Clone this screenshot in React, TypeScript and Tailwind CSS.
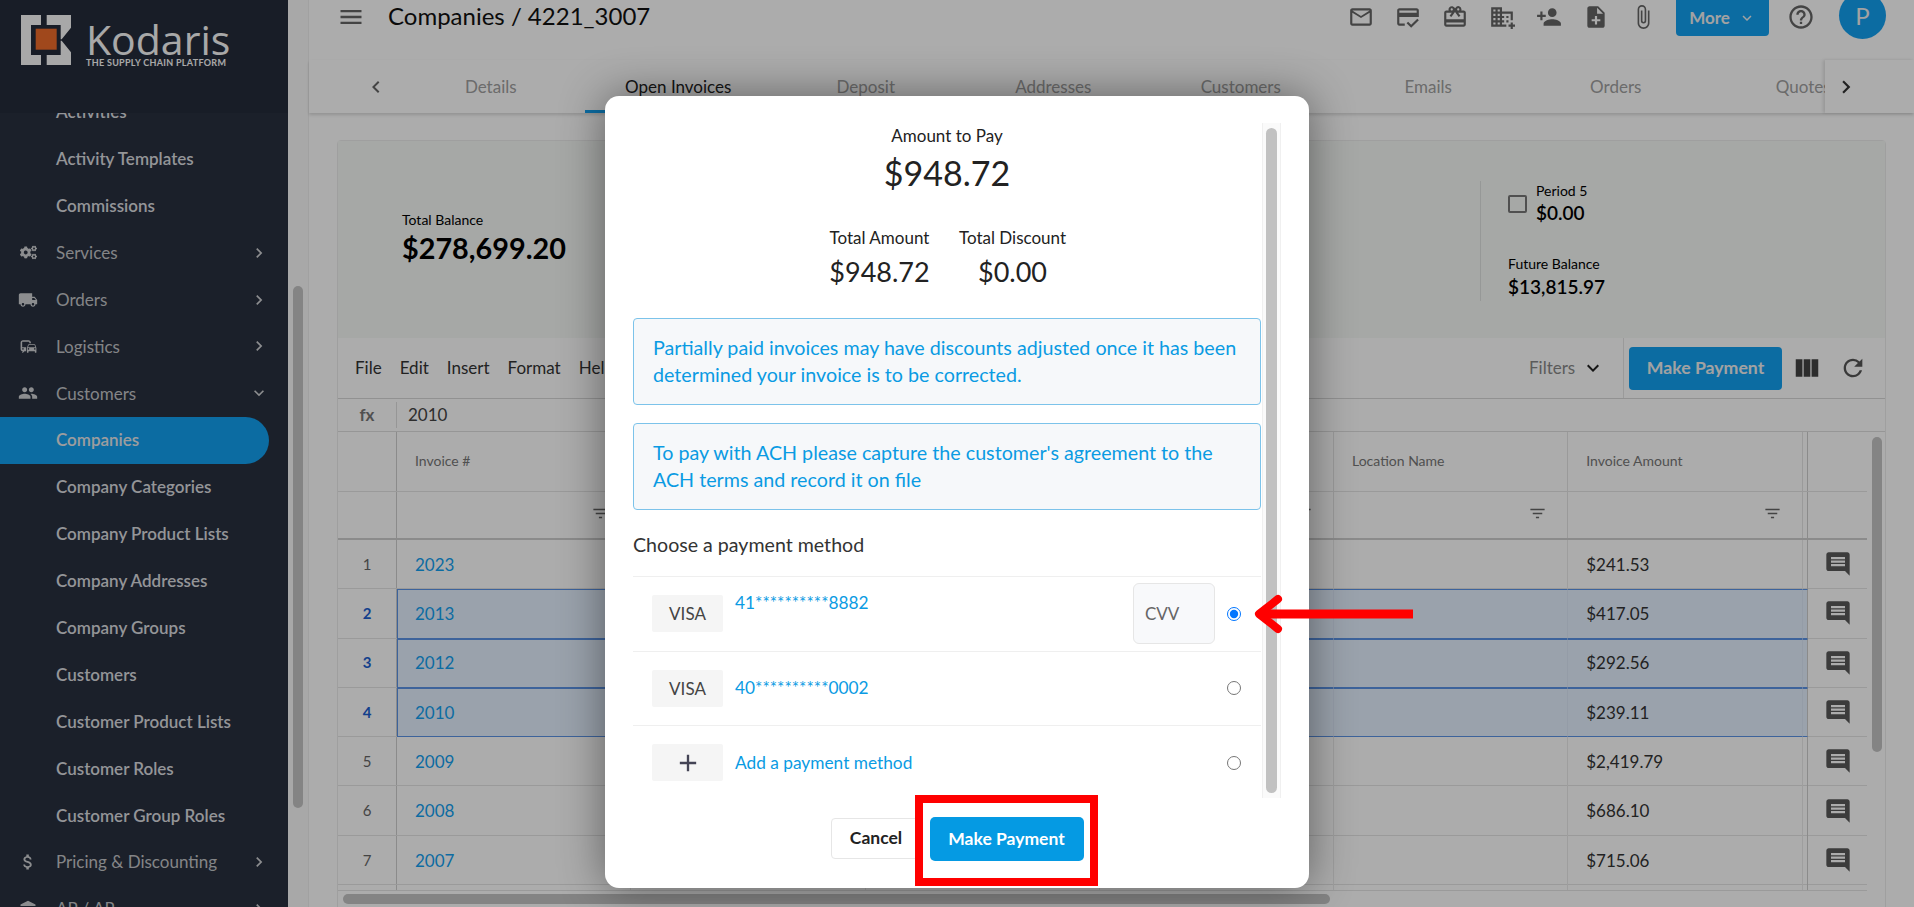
import {
  MdOutlineEmail,
  MdOutlineCreditScore,
  MdOutlineCardGiftcard,
  MdOutlineDomainAdd,
  MdPersonAdd,
  MdNoteAdd,
  MdOutlineAttachFile,
  MdHelpOutline,
  MdMenu,
  MdLocalShipping,
  MdCommute,
  MdPeople,
  MdAttachMoney,
  MdViewColumn,
  MdRefresh,
  MdFilterList,
  MdInsertComment,
  MdKeyboardArrowRight,
  MdKeyboardArrowLeft,
  MdKeyboardArrowDown,
  MdAdd,
  MdAccountBalance,
} from "react-icons/md";
import { FaCogs } from "react-icons/fa";

const NAV = [
  { label: "Activities", sub: true },
  { label: "Activity Templates", sub: true },
  { label: "Commissions", sub: true },
  { label: "Services", icon: <FaCogs size={17} />, arrow: "right" },
  { label: "Orders", icon: <MdLocalShipping size={20} />, arrow: "right" },
  { label: "Logistics", icon: <MdCommute size={19} />, arrow: "right" },
  { label: "Customers", icon: <MdPeople size={20} />, arrow: "down" },
  { label: "Companies", sub: true, active: true },
  { label: "Company Categories", sub: true },
  { label: "Company Product Lists", sub: true },
  { label: "Company Addresses", sub: true },
  { label: "Company Groups", sub: true },
  { label: "Customers", sub: true },
  { label: "Customer Product Lists", sub: true },
  { label: "Customer Roles", sub: true },
  { label: "Customer Group Roles", sub: true },
  { label: "Pricing & Discounting", icon: <MdAttachMoney size={20} />, arrow: "right" },
  { label: "AP / AR", icon: <MdAccountBalance size={18} />, arrow: "right" },
];

const TABS = ["Details", "Open Invoices", "Deposit", "Addresses", "Customers", "Emails", "Orders", "Quotes"];

const ROWS = [
  { n: 1, invoice: "2023", amount: "$241.53" },
  { n: 2, invoice: "2013", amount: "$417.05", selected: true },
  { n: 3, invoice: "2012", amount: "$292.56", selected: true },
  { n: 4, invoice: "2010", amount: "$239.11", selected: true },
  { n: 5, invoice: "2009", amount: "$2,419.79" },
  { n: 6, invoice: "2008", amount: "$686.10" },
  { n: 7, invoice: "2007", amount: "$715.06" },
  { n: 8, invoice: "", amount: "" },
];

const Sidebar = () => (
  <aside className="isolate flex h-full w-[288px] shrink-0 flex-col bg-[#28303f]">
    <div className="relative z-10 flex h-[113px] shrink-0 items-start bg-[#242b3a] pt-[15px] pl-[21px]">
      <svg width="50" height="50" viewBox="0 0 50 50" className="shrink-0">
        <path d="M0 0H20V10H10V40H20V50H0Z" fill="#fafafa" />
        <path d="M25.700 0H50V12.700L40.700 24.300H39.700V10H25.700Z" fill="#fafafa" />
        <path d="M25.700 50H50V37.300L40.700 25.700H39.700V40H25.700Z" fill="#fafafa" />
        <rect x="14.700" y="13.700" width="21" height="21" fill="#ed6b2a" />
      </svg>
      <div className="ml-[15px] flex flex-col text-[#fafafa]">
        <span className="mt-[5px] font-['Open_Sans',sans-serif] text-[41px] leading-[38px] font-medium">Kodaris</span>
        <span className="text-[9px] leading-[9px] font-bold tracking-[0.3px] whitespace-nowrap">THE SUPPLY CHAIN PLATFORM</span>
      </div>
    </div>
    <nav className="-mt-[24.500px] flex-1 overflow-hidden">
      {NAV.map((item, i) => (
        <div
          key={i}
          className={`relative flex h-[46.900px] w-[269px] items-center rounded-r-[24px] text-[17px] whitespace-nowrap ${
            item.active ? "bg-[#13a0f1] font-semibold text-[#e8e9eb]" : item.sub ? "font-semibold text-[#dcdde0]" : "text-[#c4c5c8]"
          }`}
        >
          <span className="flex w-[56px] justify-center text-[#d0d1d4]">{item.icon}</span>
          {item.label}
          {item.arrow === "right" && <MdKeyboardArrowRight size={20} className="absolute right-0 text-[#d0d1d4]" />}
          {item.arrow === "down" && <MdKeyboardArrowDown size={20} className="absolute right-0 text-[#d0d1d4]" />}
        </div>
      ))}
    </nav>
  </aside>
);

const TopBar = () => (
  <header className="flex h-[60px] shrink-0 items-start pr-[28px] pl-[28px] text-[#666]">
    <MdMenu size={28} className="mt-[3px] shrink-0" />
    <h1 className="ml-[23px] text-[24px] leading-[31px] whitespace-nowrap text-[#111]">Companies / 4221_3007</h1>
    <div className="ml-auto flex items-start">
      <div className="flex h-[34px] items-center gap-[21px] text-[#666]">
        <MdOutlineEmail size={26} />
        <MdOutlineCreditScore size={26} />
        <MdOutlineCardGiftcard size={26} />
        <MdOutlineDomainAdd size={26} />
        <MdPersonAdd size={26} />
        <MdNoteAdd size={26} />
        <MdOutlineAttachFile size={26} />
      </div>
      <button className="ml-[20px] flex h-[36px] w-[93px] items-center justify-center gap-[8px] rounded-b-[4px] bg-[#13a0f1] text-[17px] font-bold text-[#f0f0f0]">
        More <MdKeyboardArrowDown size={18} />
      </button>
      <MdHelpOutline size={28} className="mt-[3px] ml-[18px] shrink-0" />
      <div className="-mt-[8px] ml-[24px] flex h-[47px] w-[47px] shrink-0 items-center justify-center rounded-full bg-[#13a0f1] text-[24px] text-[#f0f0f0]">
        P
      </div>
    </div>
  </header>
);

const TabBar = () => (
  <div className="flex h-[53px] shrink-0 items-stretch bg-white shadow-[0_2px_3px_rgba(0,0,0,0.15)]">
    <div className="flex w-[88px] shrink-0 items-center justify-end pr-[9px] text-[#666]">
      <MdKeyboardArrowLeft size={24} />
    </div>
    <div className="flex flex-1 overflow-hidden">
      {TABS.map((t) => (
        <div
          key={t}
          className={`flex w-[187.500px] shrink-0 items-center justify-center border-b-[3px] pt-[3px] text-[17px] whitespace-nowrap ${
            t === "Open Invoices" ? "border-[#13a0f1] text-[#222]" : "border-transparent text-[#a0a0a0]"
          }`}
        >
          {t}
        </div>
      ))}
    </div>
    <div className="flex w-[89px] shrink-0 items-center pl-[8px] text-[#333] shadow-[-2px_0_3px_rgba(0,0,0,0.12)]">
      <MdKeyboardArrowRight size={26} />
    </div>
  </div>
);

const Summary = () => (
  <div className="flex h-[197px] shrink-0 bg-[#f6f9f7]">
    <div className="flex flex-col pt-[70px] pl-[64px] text-black">
      <span className="text-[14px] leading-[18px]">Total Balance</span>
      <span className="mt-[1px] text-[28.800px] leading-[36px] font-bold">$278,699.20</span>
    </div>
    <div className="mt-[40px] mr-[27px] ml-auto h-[120px] w-px bg-[#dfe1e0]" />
    <div className="w-[377px] pt-[41px] text-black">
      <div className="flex items-center gap-[9px]">
        <span className="h-[18px] w-[19px] rounded-[2px] border-2 border-[#777]" />
        <div className="flex flex-col">
          <span className="text-[14px] leading-[18px]">Period 5</span>
          <span className="text-[19px] leading-[26px] font-semibold">$0.00</span>
        </div>
      </div>
      <div className="mt-[29px] flex flex-col">
        <span className="text-[14px] leading-[18px]">Future Balance</span>
        <span className="mt-[1px] text-[19px] leading-[26px] font-semibold">$13,815.97</span>
      </div>
    </div>
  </div>
);

const Toolbar = () => (
  <div className="flex h-[61px] shrink-0 items-stretch border-b border-[#d8d8d8] bg-white">
    <div className="flex items-center gap-[18px] pl-[17px] text-[17px] text-[#333]">
      <span>File</span>
      <span>Edit</span>
      <span>Insert</span>
      <span>Format</span>
      <span>Help</span>
    </div>
    <div className="ml-auto flex w-[83px] items-center gap-[6px] text-[17px] text-[#888]">
      <span>Filters</span>
      <MdKeyboardArrowDown size={24} className="shrink-0 text-[#222]" />
    </div>
    <div className="mr-[5px] ml-[11px] w-px bg-[#e4e4e4]" />
    <div className="flex items-center">
      <button className="flex h-[43px] w-[153px] items-center justify-center rounded-[4px] bg-[#13a0f1] text-[17.700px] font-bold text-[#f0f0f0]">
        Make Payment
      </button>
      <MdViewColumn size={30} className="ml-[10px] text-[#444]" />
      <MdRefresh size={28} className="mr-[18px] ml-[17px] text-[#555]" />
    </div>
  </div>
);

const Grid = "grid grid-cols-[59px_repeat(6,234.250px)_5.500px_1fr]";

const InvoiceTable = () => (
  <div className="flex h-[508px] shrink-0 flex-col overflow-hidden">
    <div className="flex h-[33px] shrink-0 items-center border-b border-[#dedede] text-[17px] text-[#444]">
      <span className="flex w-[59px] justify-center border-r border-[#dedede] font-bold text-[#777]">fx</span>
      <span className="pl-[11px]">2010</span>
    </div>
    <div className="flex min-h-0 flex-1">
      <div className="w-[1529px] shrink-0 overflow-hidden border-b border-[#e4e4e4]">
        <div className={`${Grid} h-[60px] border-b border-[#e4e4e4] text-[14px] text-[#777]`}>
          <div className="border-r border-[#cfcfcf]" />
          {["Invoice #", "", "", "", "Location Name", "Invoice Amount"].map((h, i) => (
            <div key={i} className="border-r border-[#e4e4e4] pt-[18px] pl-[18px]">
              {h}
            </div>
          ))}
          <div className="border-r border-[#cfcfcf]" />
          <div />
        </div>
        <div className={`${Grid} h-[48px] border-b-2 border-[#cfcfcf]`}>
          <div className="border-r border-[#cfcfcf]" />
          {[0, 1, 2, 3, 4, 5].map((i) => (
            <div key={i} className="flex items-center justify-end border-r border-[#e4e4e4] pr-[20px] pb-[3px] text-[#666]">
              <MdFilterList size={19} />
            </div>
          ))}
          <div className="border-r border-[#cfcfcf]" />
          <div />
        </div>
        {ROWS.map((r) => (
          <div key={r.n} className={`${Grid} h-[49.300px] border-b border-[#e4e4e4] text-[17px]`}>
            <div
              className={`flex items-center justify-center border-r border-[#cfcfcf] text-[15px] ${
                r.selected ? "font-bold text-[#1d5fd0]" : "text-[#666]"
              }`}
            >
              {r.n}
            </div>
            {[r.invoice, "", "", "", "", r.amount].map((c, i) => (
              <div
                key={i}
                className={`-mb-px flex items-center border-r ${i === 0 ? "text-[#13a0f1]" : "text-[#333]"} ${
                  r.selected ? "border-y border-r-[#dce8f8] border-y-[#5b93e6] bg-[#e4f0ff]" : "border-[#eaeaea]"
                } ${r.selected && i === 0 ? "border-l border-l-[#5b93e6] pl-[17px]" : "pl-[18px]"}`}
              >
                {c}
              </div>
            ))}
            <div className={`-mb-px border-r border-[#cfcfcf] ${r.selected ? "border-y border-y-[#5b93e6] bg-[#e4f0ff]" : ""}`} />
            <div className="flex items-center justify-center text-[#5a5a5a]">{r.invoice && <MdInsertComment size={28} />}</div>
          </div>
        ))}
      </div>
      <div className="flex-1 pt-[5px] pl-[5px]">
        <div className="h-[315px] w-[10px] rounded-full bg-[#c4c4c4]" />
      </div>
    </div>
    <div className="flex h-[16px] shrink-0 items-center pl-[5px]">
      <div className="h-[10px] w-[987px] rounded-full bg-[#c4c4c4]" />
    </div>
  </div>
);

const Alert = ({ children }: { children: React.ReactNode }) => (
  <div className="mt-[18px] flex h-[87px] flex-col justify-center rounded-[4px] border border-[#7cc3ea] bg-[#f6f8fa] pl-[19px] text-[19.700px] leading-[26.500px] whitespace-nowrap text-[#0a9be3]">
    {children}
  </div>
);

const MethodRow = ({
  badge,
  label,
  checked,
  cvv,
  alignTop,
}: {
  badge: React.ReactNode;
  label: string;
  checked?: boolean;
  cvv?: boolean;
  alignTop?: boolean;
}) => (
  <div className="flex h-[74.500px] items-center border-t border-[#efefef] pl-[19px]">
    <div className="flex h-[37px] w-[71px] items-center justify-center rounded-[2px] bg-[#f5f5f5] text-[17px] text-[#444]">{badge}</div>
    <span className={`ml-[12px] text-[17.300px] text-[#0a9be3] ${alignTop ? "-mt-[22px]" : ""}`}>{label}</span>
    {cvv && (
      <div className="ml-auto flex h-[61px] w-[82px] items-center rounded-[6px] border border-[#e6e6e6] bg-[#f8f9fb] pl-[11px] text-[17px] text-[#666]">
        CVV
      </div>
    )}
    <input
      type="radio"
      readOnly
      checked={!!checked}
      className={`mr-[20px] h-[14px] w-[14px] ${cvv ? "ml-[12px]" : "ml-auto"}`}
    />
  </div>
);

const PaymentModal = () => (
  <div className="absolute top-[96px] left-[605px] flex h-[792px] w-[704px] flex-col rounded-[14px] bg-white shadow-[0_0_45px_rgba(0,0,0,0.45)]">
    <div className="mt-[27px] flex h-[675px] shrink-0 pl-[28px]">
      <div className="w-[628px] overflow-hidden">
        <div className="flex flex-col items-center text-[#222]">
          <span className="mt-[1px] text-[17px] leading-[24px]">Amount to Pay</span>
          <span className="mt-[2px] text-[34px] leading-[46px]">$948.72</span>
          <div className="mt-[31px] flex gap-[27px]">
            <div className="flex w-[104px] flex-col items-center">
              <span className="text-[17px] leading-[22px] whitespace-nowrap">Total Amount</span>
              <span className="mt-[5px] text-[27px] leading-[36px]">$948.72</span>
            </div>
            <div className="flex w-[108px] flex-col items-center">
              <span className="text-[17px] leading-[22px] whitespace-nowrap">Total Discount</span>
              <span className="mt-[5px] text-[27px] leading-[36px]">$0.00</span>
            </div>
          </div>
        </div>
        <div className="pt-[10px]">
          <Alert>
            <p>Partially paid invoices may have discounts adjusted once it has been</p>
            <p>determined your invoice is to be corrected.</p>
          </Alert>
          <Alert>
            <p>To pay with ACH please capture the customer's agreement to the</p>
            <p>ACH terms and record it on file</p>
          </Alert>
        </div>
        <h3 className="mt-[21px] mb-[17px] text-[19.600px] leading-[28px] text-[#333]">Choose a payment method</h3>
        <MethodRow badge="VISA" label="41**********8882" checked cvv alignTop />
        <MethodRow badge="VISA" label="40**********0002" />
        <MethodRow badge={<MdAdd size={28} className="text-[#445]" />} label="Add a payment method" />
      </div>
      <div className="ml-px w-[19px] border-x border-[#f0f0f0] bg-[#fafafa] px-[3px] py-[5px]">
        <div className="h-full rounded-full bg-[#c1c1c1]" />
      </div>
    </div>
    <div className="mt-[19px] flex justify-center gap-[8px]">
      <button className="mt-px h-[41px] w-[91px] rounded-[4px] border border-[#e6e6e6] bg-white text-[17.500px] font-bold text-[#222]">
        Cancel
      </button>
      <button className="h-[44px] w-[154px] rounded-[5px] bg-[#059ae3] text-[17.500px] font-bold text-white">Make Payment</button>
    </div>
  </div>
);

export default function App() {
  return (
    <div className="relative flex h-[907px] w-[1914px] overflow-hidden bg-white font-[Lato,sans-serif]">
      <Sidebar />
      <div className="flex w-[20px] shrink-0 justify-center bg-[#fafafa] pt-[286px]">
        <div className="h-[522px] w-[10px] rounded-full bg-[#c4c4c4]" />
      </div>
      <main className="flex min-w-0 flex-1 flex-col border-l border-[#efefef]">
        <TopBar />
        <TabBar />
        <div className="mt-[27px] mr-[28px] ml-[28px] flex flex-col rounded-t-[4px] border border-[#ececec]">
          <Summary />
          <Toolbar />
          <InvoiceTable />
        </div>
      </main>
      {/* backdrop */}
      <div className="absolute inset-0 bg-black/[0.325]" />
      <PaymentModal />
      {/* annotations on top of the screenshot */}
      <div className="absolute top-[795px] left-[915px] h-[91px] w-[183px] border-8 border-[#ff0000]" />
      <svg className="absolute top-[590px] left-[1250px]" width="170" height="48" viewBox="0 0 170 48">
        <path d="M10 24H163" stroke="#ff0000" strokeWidth="9" />
        <path d="M28 9L9 24L28 39" fill="none" stroke="#ff0000" strokeWidth="8" strokeLinecap="round" strokeLinejoin="round" />
      </svg>
    </div>
  );
}
